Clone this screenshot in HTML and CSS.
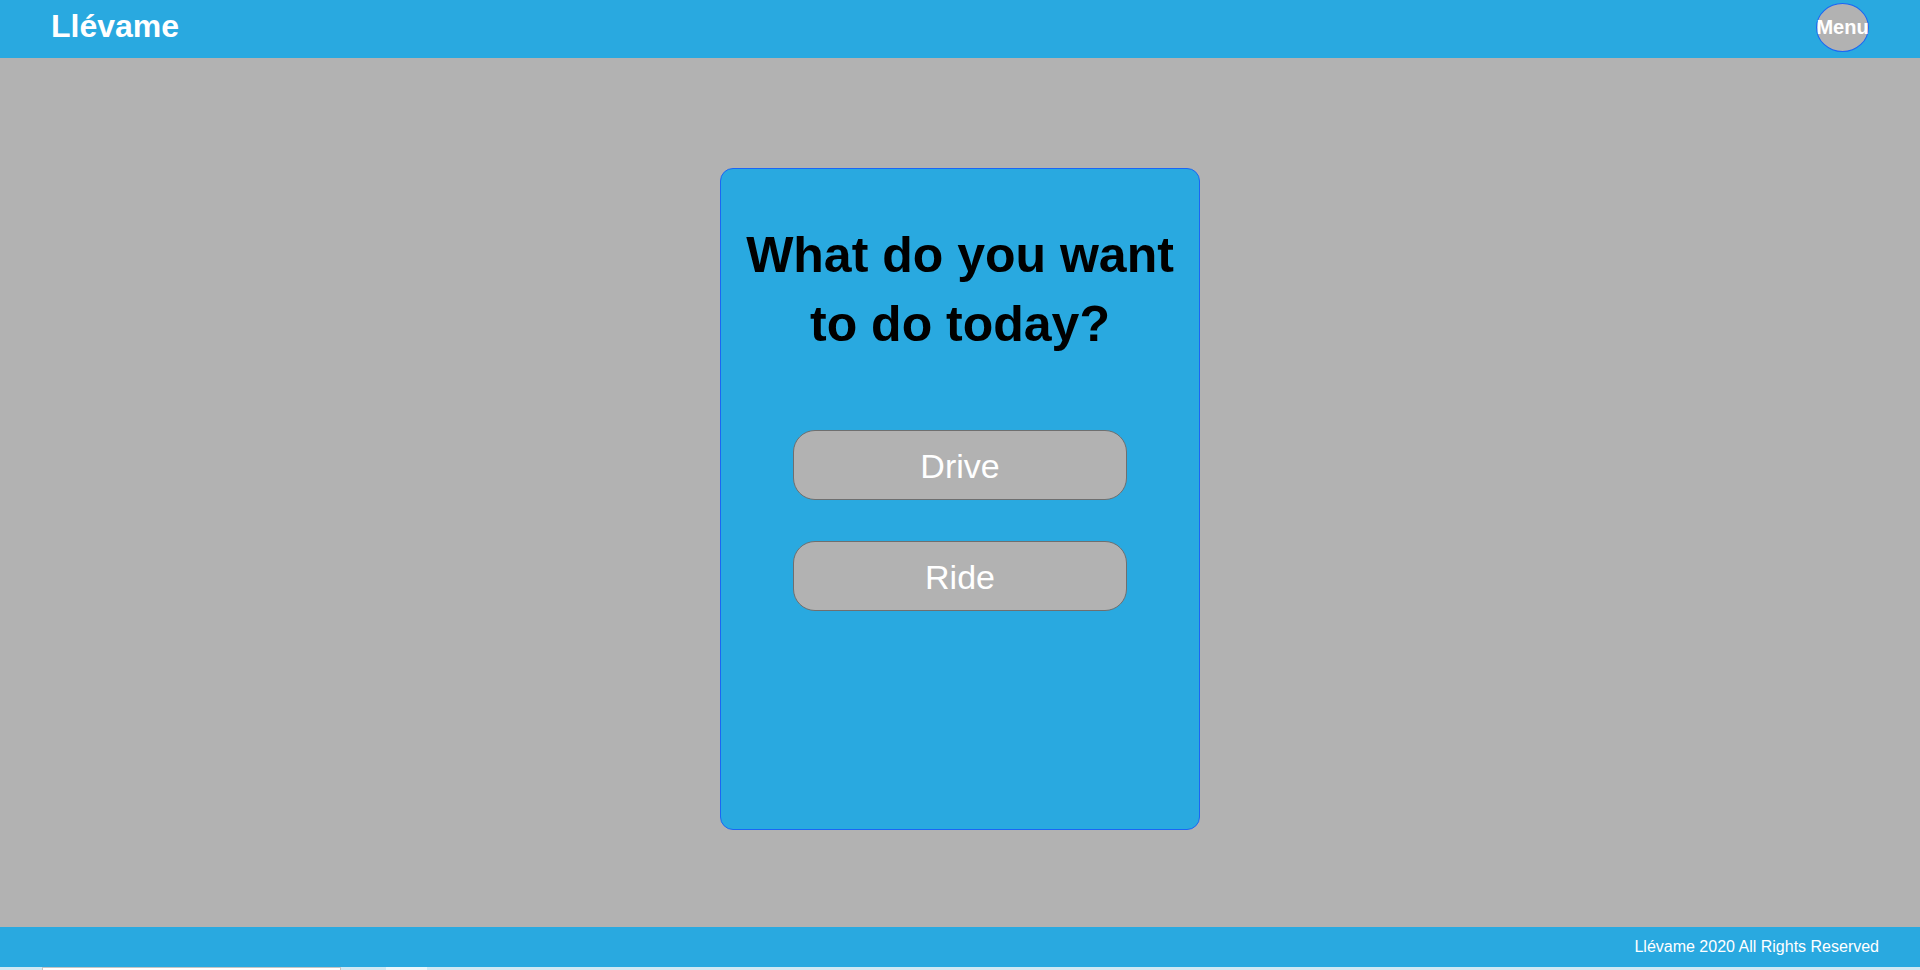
FILE: index.html
```html
<!DOCTYPE html>
<html lang="en">
<head>
<meta charset="utf-8">
<title>Llévame</title>
<link rel="stylesheet" href="styles.css">
</head>
<body>
<div class="page">
  <header class="topbar">
    <div class="brand">Llévame</div>
    <button class="menu-btn" type="button">Menu</button>
  </header>
  <main class="main">
    <section class="card">
      <h1 class="question">What do you want to do today?</h1>
      <div class="choices">
        <button class="choice" type="button">Drive</button>
        <button class="choice" type="button">Ride</button>
      </div>
    </section>
  </main>
  <footer class="footer">Llévame 2020 All Rights Reserved</footer>
  <div class="taskstrip">
    <span class="ts-a"></span>
    <span class="ts-b"></span>
    <span class="ts-c"></span>
    <span class="ts-d"></span>
  </div>
</div>
</body>
</html>
```
FILE: styles.css
```css
* { box-sizing: border-box; }
html, body {
  margin: 0;
  padding: 0;
  height: 100%;
  overflow: hidden;
}
body {
  font-family: "Liberation Sans", Arial, sans-serif;
  background: #b2b2b2;
}
.page {
  display: flex;
  flex-direction: column;
  height: 970px;
}
.topbar {
  height: 58px;
  flex: 0 0 58px;
  background: #29a9e0;
  display: flex;
  justify-content: space-between;
  align-items: flex-start;
  padding: 0 51px;
}
.brand {
  color: #fff;
  font-weight: bold;
  font-size: 32px;
  line-height: 37px;
  padding-top: 8px;
}
.menu-btn {
  margin-top: 3px;
  width: 53px;
  height: 49px;
  border-radius: 50%;
  border: 1px solid #1a66f5;
  background: #b2b2b2;
  color: #fff;
  font-family: "Liberation Sans", Arial, sans-serif;
  font-weight: bold;
  font-size: 20px;
  line-height: 23px;
  padding: 0;
  white-space: nowrap;
  display: flex;
  justify-content: center;
  align-items: center;
  overflow: visible;
}
.main {
  flex: 0 0 869px;
  display: flex;
  justify-content: center;
  align-items: flex-start;
  padding-top: 110px;
}
.card {
  width: 480px;
  height: 662px;
  background: #29a9e0;
  border: 1px solid #1a66f5;
  border-radius: 13px;
  padding: 52px 20px 0;
  display: flex;
  flex-direction: column;
  align-items: center;
}
.question {
  margin: 0;
  font-size: 50px;
  line-height: 69px;
  font-weight: bold;
  color: #000;
  text-align: center;
}
.choices {
  margin-top: 71px;
  display: flex;
  flex-direction: column;
  gap: 41px;
}
.choice {
  width: 334px;
  height: 70px;
  border: 1px solid #6f6f6f;
  border-radius: 22px;
  background: #b2b2b2;
  color: #fff;
  font-family: "Liberation Sans", Arial, sans-serif;
  font-size: 34px;
  padding: 2px 0 0;
  cursor: pointer;
}
.footer {
  flex: 0 0 40px;
  height: 40px;
  background: #29a9e0;
  color: #fff;
  font-size: 16px;
  display: flex;
  align-items: center;
  justify-content: flex-end;
  padding-right: 41px;
}
.taskstrip {
  flex: 0 0 3px;
  height: 3px;
  background: #cfe9f4;
  display: flex;
}
.ts-a { width: 42px; }
.ts-b {
  width: 299px;
  background: #ffffff;
  border-top: 1px solid #c4c4c4;
  border-left: 1px solid #c4c4c4;
  border-right: 1px solid #c4c4c4;
}
.ts-c { width: 45px; }
.ts-d { width: 41px; background: #eaf7fc; }
```
